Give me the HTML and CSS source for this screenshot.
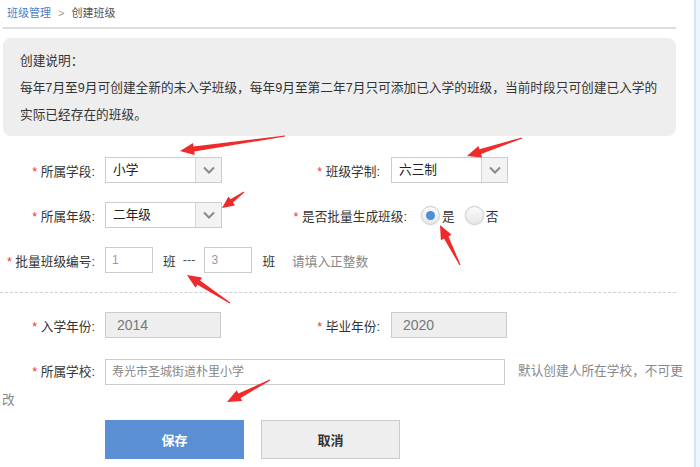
FILE: index.html
```html
<!DOCTYPE html>
<html lang="zh-CN">
<head>
    <meta charset="UTF-8">
    <meta name="viewport" content="width=device-width, initial-scale=1.0">
    <title>创建班级</title>
    <link rel="stylesheet" href="styles.css">
</head>
<body>
    <div class="main">
        <div class="crumb">
            <a href="#" class="crumb-link">班级管理</a>
            <span class="crumb-sep">&gt;</span>
            <span>创建班级</span>
        </div>

        <div class="notice">
            <p>创建说明：</p>
            <p>每年7月至9月可创建全新的未入学班级，每年9月至第二年7月只可添加已入学的班级，当前时段只可创建已入学的实际已经存在的班级。</p>
        </div>

        <div class="form">
            <div class="form-row">
                <div class="field">
                    <label class="label"><i>*</i> 所属学段:</label>
                    <div class="select">
                        <span class="select-value">小学</span>
                        <span class="select-arrow"><svg width="12" height="8" viewBox="0 0 12 8"><path d="M1 1.5 L6 6.5 L11 1.5" fill="none" stroke="#8a8a8a" stroke-width="2"/></svg></span>
                    </div>
                </div>
                <div class="field field-right">
                    <label class="label"><i>*</i> 班级学制:</label>
                    <div class="select">
                        <span class="select-value">六三制</span>
                        <span class="select-arrow"><svg width="12" height="8" viewBox="0 0 12 8"><path d="M1 1.5 L6 6.5 L11 1.5" fill="none" stroke="#8a8a8a" stroke-width="2"/></svg></span>
                    </div>
                </div>
            </div>

            <div class="form-row">
                <div class="field">
                    <label class="label"><i>*</i> 所属年级:</label>
                    <div class="select">
                        <span class="select-value">二年级</span>
                        <span class="select-arrow"><svg width="12" height="8" viewBox="0 0 12 8"><path d="M1 1.5 L6 6.5 L11 1.5" fill="none" stroke="#8a8a8a" stroke-width="2"/></svg></span>
                    </div>
                </div>
                <div class="field field-right">
                    <label class="label label-wide"><i>*</i> 是否批量生成班级:</label>
                    <span class="radio checked"></span><span class="radio-text">是</span>
                    <span class="radio"></span><span class="radio-text">否</span>
                </div>
            </div>

            <div class="form-row">
                <label class="label"><i>*</i> 批量班级编号:</label>
                <span class="input input-small">1</span>
                <span class="unit">班</span>
                <span class="dash">---</span>
                <span class="input input-small">3</span>
                <span class="unit">班</span>
                <span class="hint hint-num">请填入正整数</span>
            </div>

            <div class="divider"></div>

            <div class="form-row">
                <div class="field">
                    <label class="label"><i>*</i> 入学年份:</label>
                    <span class="input input-disabled">2014</span>
                </div>
                <div class="field field-right">
                    <label class="label"><i>*</i> 毕业年份:</label>
                    <span class="input input-disabled">2020</span>
                </div>
            </div>

            <div class="school-row">
                <label class="label"><i>*</i> 所属学校:</label><span class="input input-school">寿光市圣城街道朴里小学</span><span class="hint">默认创建人所在学校，不可更</span><span class="hint">改</span>
            </div>

            <div class="buttons">
                <button class="btn btn-save">保存</button>
                <button class="btn btn-cancel">取消</button>
            </div>
        </div>
    </div>
    <div class="scroll-strip"></div>

    <svg class="arrows" width="700" height="467" viewBox="0 0 700 467">
        <polygon points="284.9,135.5 193.5,146.6 193,143.1 180,151 194.7,155 194.2,151.5 285.1,136.5"/>
        <polygon points="243.7,191.6 230.5,199.3 228.5,196.5 222,208 234.9,205.4 232.9,202.6 244.3,192.4"/>
        <polygon points="521.8,137.5 479.5,149.3 478.4,146 467,156 482.2,157.4 481.1,154 522.2,138.5"/>
        <polygon points="460.5,264.8 448.5,236.4 451.6,234.8 440,225 440.9,240.2 444,238.6 459.5,265.2"/>
        <polygon points="230.3,302.6 200.1,280.6 202,277.6 187,275 195.5,287.7 197.4,284.7 229.7,303.4"/>
        <polygon points="269.8,379.6 238.3,393.4 236.7,390.3 227,402 242.2,401 240.6,397.9 270.2,380.4"/>
    </svg>
</body>
</html>
```

FILE: styles.css
```css
body {
    margin: 0;
    width: 700px;
    height: 467px;
    display: flex;
    overflow: hidden;
    background-color: #fff;
    font-family: 'Liberation Sans', 'Noto Sans CJK SC', sans-serif;
    font-size: 12.7px;
    color: #333;
    position: relative;
}
.main {
    flex: 1;
}
.scroll-strip {
    width: 4px;
    background-color: #eef5fb;
    border-left: 2px solid #d4e5f4;
}
.crumb {
    height: 27px;
    line-height: 27px;
    margin: 0 18px 0 3px;
    padding-left: 4px;
    font-size: 11px;
    color: #555;
    border-bottom: 2px solid #dcdcdc;
}
.crumb-link {
    color: #4a7fc8;
    text-decoration: none;
}
.crumb-sep {
    color: #999;
    margin: 0 4px;
}
.notice {
    margin: 9px 18px 0 3px;
    padding: 10px 14px 7px 17px;
    background-color: #eeeeee;
    border-radius: 8px;
    line-height: 27px;
}
.notice p {
    margin: 0;
}
.form {
    margin-top: 21px;
}
.form-row {
    display: flex;
    align-items: center;
    height: 26px;
    margin-bottom: 19px;
}
.field {
    display: flex;
    align-items: center;
    width: 290px;
}
.label {
    width: 95px;
    margin-right: 10px;
    text-align: right;
    color: #333;
    flex-shrink: 0;
}
.label i {
    font-style: normal;
    color: #e33;
}
.field-right .label {
    width: 90px;
    margin-right: 11px;
}
.field-right .label-wide {
    width: 117px;
    margin-right: 14px;
}
.select {
    display: flex;
    width: 115px;
    height: 24px;
    border: 1px solid #cccccc;
    background-color: #fff;
}
.select-value {
    flex: 1;
    line-height: 24px;
    padding-left: 7px;
    color: #222;
}
.select-arrow {
    width: 25px;
    display: flex;
    align-items: center;
    justify-content: center;
    border-left: 1px solid #d6d6d6;
    background-color: #f3f3f3;
}
.radio {
    width: 17px;
    height: 17px;
    border-radius: 50%;
    border: 1px solid #cfcfcf;
    background: linear-gradient(#fbfbfb, #e6e6e6);
    box-shadow: 0 0 2px rgba(0, 0, 0, 0.15);
    position: relative;
}
.radio.checked::after {
    content: '';
    position: absolute;
    width: 9px;
    height: 9px;
    border-radius: 50%;
    background-color: #4b8fd6;
    left: 4px;
    top: 4px;
}
.radio-text {
    margin: 0 10px 0 2px;
}
.input {
    display: inline-block;
    box-sizing: border-box;
    height: 26px;
    line-height: 24px;
    border: 1px solid #cccccc;
    padding-left: 6px;
    background-color: #fff;
    vertical-align: middle;
}
.input-small {
    width: 48px;
    color: #999;
    font-size: 12px;
}
.unit {
    margin-left: 10px;
}
.dash {
    margin: 0 9px 0 7px;
    color: #555;
}
.hint {
    color: #888;
}
.hint-num {
    margin-left: 17px;
}
.input-disabled {
    width: 116px;
    background-color: #eeeeee;
    color: #777;
    font-size: 14px;
    padding-left: 11px;
}
.divider {
    border-top: 1px dashed #cfcfcf;
    margin: 0 18px 19px 0;
}
.school-row {
    line-height: 28px;
    padding-left: 2px;
}
.school-row .label {
    display: inline-block;
    width: 93px;
    vertical-align: middle;
}
.input-school {
    width: 400px;
    color: #888;
    font-size: 12px;
    margin-right: 13px;
}
.buttons {
    display: flex;
    gap: 17px;
    margin: 6px 0 0 105px;
}
.btn {
    width: 139px;
    height: 39px;
    font-family: inherit;
    font-size: 13px;
    font-weight: bold;
    cursor: pointer;
}
.btn-save {
    background-color: #5a8fd3;
    color: #fff;
    border: none;
}
.btn-cancel {
    background-color: #eeeeee;
    color: #333;
    border: 1px solid #cccccc;
}
.arrows {
    position: absolute;
    left: 0;
    top: 0;
    pointer-events: none;
    fill: #ee2a2a;
}
```
